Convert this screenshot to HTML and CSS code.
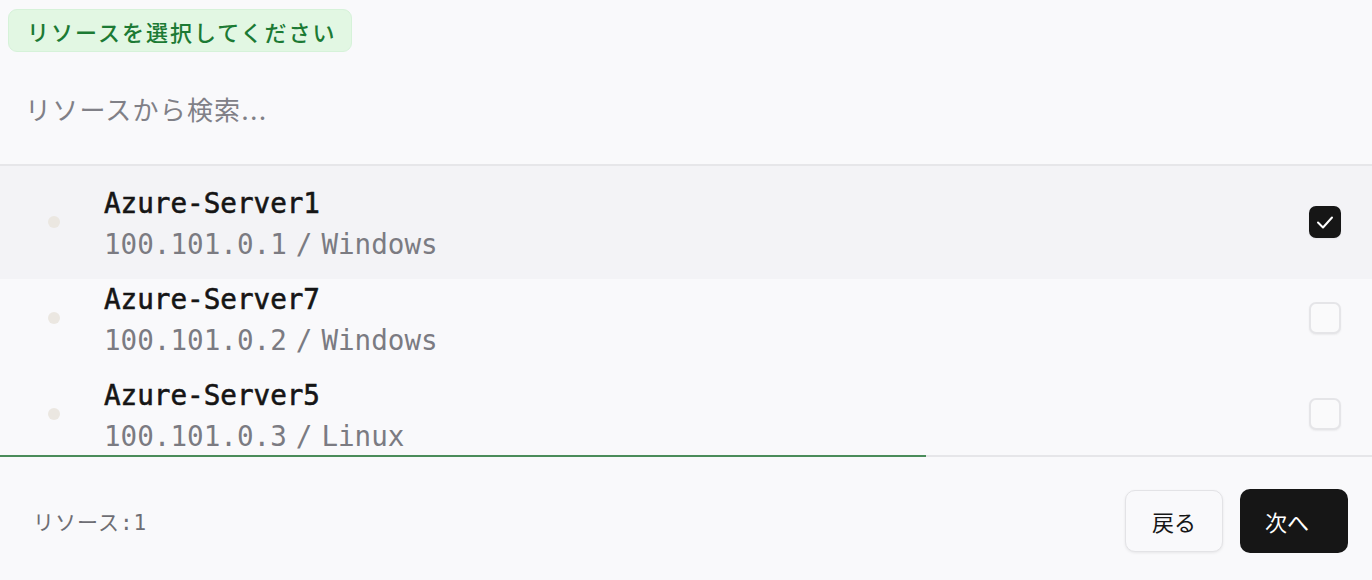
FILE: index.html
```html
<!DOCTYPE html>
<html lang="ja">
<head>
<meta charset="utf-8">
<title>リソースを選択</title>
<link rel="stylesheet" href="styles.css">
</head>
<body>
<div class="panel">
  <div class="top">
    <span class="badge">リソースを選択してください</span>
  </div>
  <div class="search">
    <input class="search-input" type="text" placeholder="リソースから検索...">
  </div>
  <div class="list">
    <div class="row selected">
      <span class="dot"></span>
      <div class="info">
        <div class="name">Azure-Server1</div>
        <div class="meta"><span>100.101.0.1</span><span>/</span><span>Windows</span></div>
      </div>
      <span class="check checked">
        <svg viewBox="0 0 32 32" width="32" height="32"><path d="M9 16.5 L14 21.5 L23 11.5" fill="none" stroke="#fff" stroke-width="2" stroke-linecap="round" stroke-linejoin="round"/></svg>
      </span>
    </div>
    <div class="row">
      <span class="dot"></span>
      <div class="info">
        <div class="name">Azure-Server7</div>
        <div class="meta"><span>100.101.0.2</span><span>/</span><span>Windows</span></div>
      </div>
      <span class="check"></span>
    </div>
    <div class="row">
      <span class="dot"></span>
      <div class="info">
        <div class="name">Azure-Server5</div>
        <div class="meta"><span>100.101.0.3</span><span>/</span><span>Linux</span></div>
      </div>
      <span class="check"></span>
    </div>
  </div>
  <div class="progress"><div class="progress-fill" style="width: 926px"></div></div>
  <div class="footer">
    <span class="count">リソース:1</span>
    <div class="actions">
      <button class="btn btn-back" type="button">戻る</button>
      <button class="btn btn-next" type="button">次へ</button>
    </div>
  </div>
</div>
</body>
</html>
```
FILE: styles.css
```css
html, body {
  margin: 0;
  padding: 0;
  background: #f9f9fb;
}
body {
  width: 1372px;
  height: 580px;
  overflow: hidden;
  font-family: "Inter", "Noto Sans CJK JP", sans-serif;
  color: #161616;
}
.panel {
  display: flex;
  flex-direction: column;
  height: 580px;
}
.top {
  padding: 9px 0 0 8px;
  height: 43px;
}
.badge {
  display: inline-flex;
  align-items: center;
  box-sizing: border-box;
  height: 43px;
  width: 344px;
  padding: 0 0 0 18px;
  background: #e2f7e3;
  border: 1px solid #d6f2d9;
  border-radius: 9px;
  color: #1c7a34;
  font-size: 22px;
  font-weight: 500;
  letter-spacing: 2px;
  white-space: nowrap;
}
.search {
  height: 114px;
  display: flex;
  align-items: center;
  padding-top: 4px;
  box-sizing: border-box;
  border-bottom: 2px solid #e6e6e9;
}
.search-input {
  border: none;
  outline: none;
  background: transparent;
  width: 100%;
  padding: 0 0 0 25px;
  font-family: "Inter", "Noto Sans CJK JP", sans-serif;
  font-size: 26px;
  letter-spacing: 1.2px;
  color: #161616;
}
.search-input::placeholder {
  color: #808087;
}
.list {
  height: 289px;
  overflow: hidden;
  padding-top: 8px;
  box-sizing: border-box;
}
.row {
  height: 96px;
  display: flex;
  align-items: center;
  padding: 0 31px 0 48px;
}
.row.selected {
  background: #f3f3f6;
  box-shadow: 0 -8px 0 #f3f3f6, 0 9px 0 #f3f3f6;
}
.dot {
  width: 12px;
  height: 12px;
  border-radius: 50%;
  background: #ebe7e1;
  flex: none;
  margin-right: 44px;
}
.info {
  flex: 1;
  display: flex;
  flex-direction: column;
  padding-top: 3px;
  font-family: "DejaVu Sans Mono", "Liberation Mono", monospace;
  font-size: 27.6px;
  line-height: 41px;
}
.name {
  color: #151515;
  font-weight: 400;
  -webkit-text-stroke: 0.6px #151515;
}
.meta {
  display: flex;
  gap: 9px;
  color: #7b7b82;
}
.check {
  flex: none;
  width: 32px;
  height: 32px;
  box-sizing: border-box;
  border-radius: 7px;
  border: 2px solid #e5e5e8;
  background: #fafafb;
  box-shadow: 0 1px 2px rgba(0, 0, 0, 0.06);
  display: flex;
}
.check.checked {
  border: none;
  background: #161616;
}
.progress {
  height: 2px;
  background: #e6e6e9;
}
.progress-fill {
  height: 2px;
  background: #4a8c5a;
}
.footer {
  flex: 1;
  display: flex;
  align-items: center;
  justify-content: space-between;
  padding: 5px 24px 0 33px;
}
.count {
  font-family: "DejaVu Sans Mono", "Noto Sans CJK JP", monospace;
  font-size: 21px;
  letter-spacing: 1px;
  color: #6e6e74;
}
.actions {
  display: flex;
  align-items: center;
  gap: 17px;
}
.btn {
  font-family: "Inter", "Noto Sans CJK JP", sans-serif;
  font-size: 22px;
  border-radius: 10px;
  cursor: pointer;
}
.btn-back {
  width: 98px;
  height: 62px;
  background: #f9f9fb;
  border: 1px solid #e3e3e6;
  box-shadow: 0 1px 3px rgba(0, 0, 0, 0.08);
  color: #161616;
}
.btn-next {
  width: 108px;
  height: 64px;
  background: #161616;
  border: none;
  color: #ffffff;
  text-align: left;
  padding: 0 0 0 25px;
}
```
